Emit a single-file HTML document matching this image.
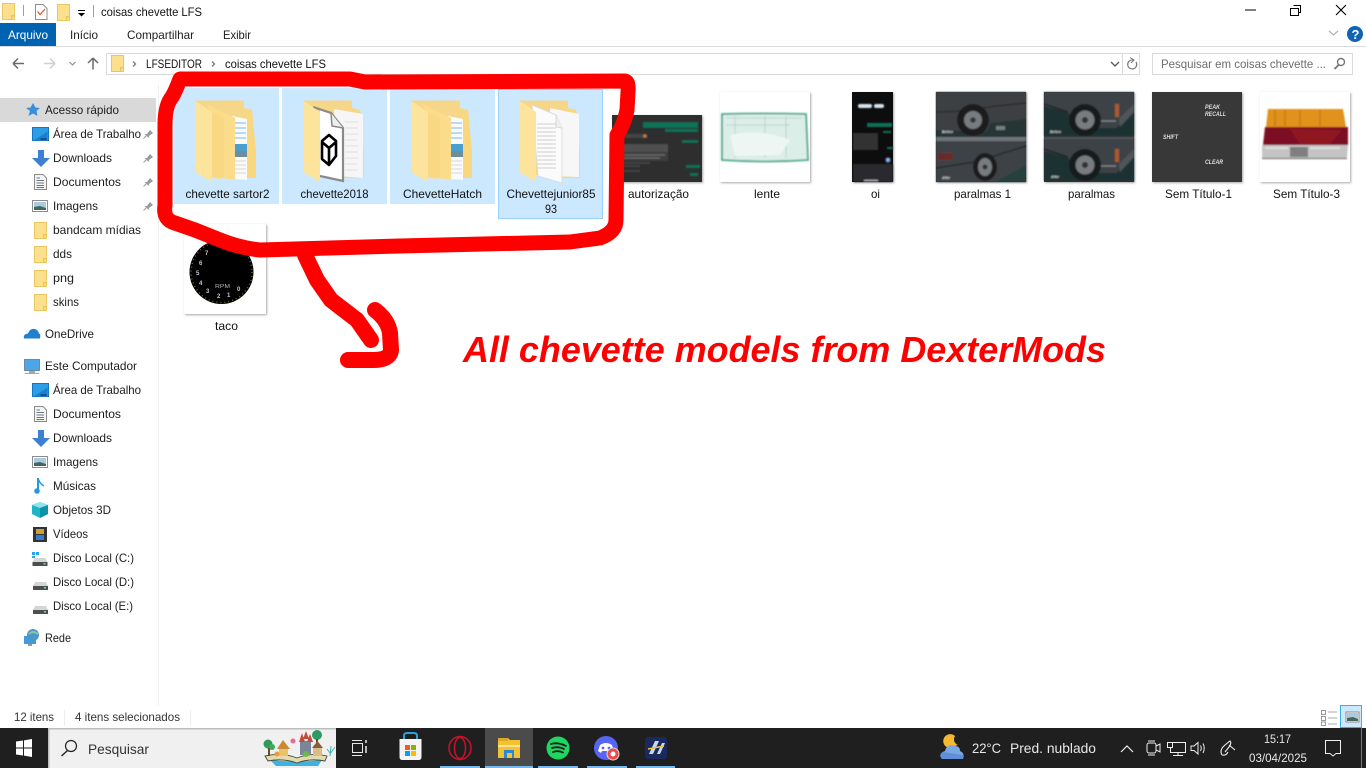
<!DOCTYPE html>
<html><head><meta charset="utf-8"><title>coisas chevette LFS</title>
<style>
html,body{margin:0;padding:0;background:#fff;overflow:hidden;width:1366px;height:768px}
svg{display:block;position:absolute;left:0;top:0}
text{font-family:"Liberation Sans",sans-serif;font-size:12px;fill:#111}
.s{fill:#1c1c1c}
.w{fill:#e8e8e8}
.n{font-size:6px;font-weight:bold;fill:#c8c8c8}
.t{font-size:6px;font-weight:bold;font-style:italic;fill:#ddd}
.c{font-size:3.5px;font-style:italic;font-weight:bold;fill:#ddd}
</style></head><body>
<svg width="1366" height="768" viewBox="0 0 1366 768" xmlns="http://www.w3.org/2000/svg">
<defs>
<filter id="b" x="-5%" y="-5%" width="110%" height="110%"><feGaussianBlur stdDeviation="0.85"/></filter>
<filter id="b2" x="-5%" y="-5%" width="110%" height="110%"><feGaussianBlur stdDeviation="0.3"/></filter>
<filter id="sh" x="-5%" y="-5%" width="112%" height="112%"><feDropShadow dx="1" dy="1" stdDeviation="1" flood-color="#000" flood-opacity=".35"/></filter>
<g id="sf"><path d="M.5 .5H12.5V16.5H.5Z" fill="#fde08d" stroke="#e9c65f"/><path d="M9.500 16V12.500H12.500" fill="#f7cf65" stroke="#e9c65f"/></g>
<g id="back"><path d="M195 100.500H244V108L252 110L256 153V178H230L195 172Z" fill="#f6d688"/><path d="M244 108L252 110L256 153V178H246Z" fill="#f9d77f"/></g>
<g id="front"><path d="M204 103L235 118V148L222 153V180L212 177V112Z" fill="#fbdc8a"/><path d="M222 153L235 148V180L222 178Z" fill="#fbdc8a"/><path d="M212 112L224 119V178L212 177Z" fill="#f8d883"/><path d="M195 100.500L212 112V182L195 172Z" fill="#fde49c"/></g>
<g id="blueDoc"><path d="M232 116L247 119V180L233 179Z" fill="#fafafa"/><path d="M235 123H246M235 128H246M235 133H246M235 138H246" stroke="#74bde8" stroke-width="1"/><rect x="235" y="144" width="12" height="13" fill="#4b9fd0"/><rect x="235" y="151" width="12" height="6" fill="#6d8f9d"/><path d="M234 161H246M234 165H246M234 169H246M234 173H246" stroke="#d5d5d5"/></g>
<g id="dl"><path d="M0 8H6V0H12V8H18L9 17Z" fill="#3b80d2"/></g>
<g id="desk"><rect x="0" y="0" width="16" height="13" fill="#2c9ee6" stroke="#1476c2"/><path d="M1 13L15 4V13Z" fill="#1a80d4"/><rect x="8" y="11" width="6" height="1" fill="#222"/></g>
<g id="docu"><path d="M.5 .5H9L12.5 4V15.5H.5Z" fill="#f4f4f4" stroke="#8a8a8a"/><path d="M2.500 4H6M2.500 6.500H10M2.500 9H10M2.500 11.500H10M2.500 13.500H10" stroke="#6c7a86"/></g>
<g id="pic"><rect x=".5" y=".5" width="15" height="11" fill="#fff" stroke="#8d8d8d"/><rect x="2" y="2" width="12" height="8" fill="#a8cbe3"/><path d="M2 7L8 6L14 8V10H2Z" fill="#47655a"/></g>
<g id="pin" fill="#9a9a9a"><path d="M4 5L7 1L10 4L6 7L5.500 9L1.500 5Z"/><path d="M3 7L.5 9.500" stroke="#9a9a9a"/></g>
<g id="drive"><path d="M2 6H13L15 10H0Z" fill="#d6d6d6"/><rect x="0" y="10" width="15" height="4" fill="#4b4f52"/><rect x="11" y="11" width="2" height="1.500" fill="#6fdc6f"/></g>
<g id="carA"><rect width="90" height="45" fill="#283635"/><path d="M0 0H90V27L55 31L50 40L0 38Z" fill="#3c4043"/><path d="M0 20L26 19L60 14L90 11" stroke="#2a2c2e" stroke-width="1.500" fill="none"/><circle cx="37" cy="28" r="16" fill="#1b1d1e"/><circle cx="37" cy="28" r="9" fill="#787c7f"/><circle cx="37" cy="28" r="2.800" fill="#35383a"/></g>
<g id="carB"><rect width="90" height="44" fill="#1f3230"/><path d="M0 0H90V20L72 36H48L22 20L0 14Z" fill="#3e4347"/><path d="M48 29H72" stroke="#8f9294" stroke-width="1" fill="none"/><path d="M0 12L24 20" stroke="#202224" stroke-width="1.500"/><rect x="71" y="12" width="4" height="13" fill="#a95a2c"/><path d="M75 27L90 12V20L76 35Z" fill="#50555a"/><circle cx="41" cy="28" r="16" fill="#191b1c"/><circle cx="41" cy="28" r="9.500" fill="#787c7f"/><circle cx="41" cy="28" r="3" fill="#2e3032"/></g>
</defs>

<!-- title bar -->
<use href="#sf" x="2" y="3"/>
<rect x="23" y="5" width="1" height="11" fill="#a0a0a0"/>
<path d="M35.500 4.500H43L47 8.500V19.500H35.500Z" fill="#fff" stroke="#8d8d8d"/><path d="M37.500 11.500L40 14.500L45 9" fill="none" stroke="#e8562a" stroke-width="1.300"/>
<use href="#sf" x="57" y="4"/>
<rect x="78" y="10" width="7" height="1" fill="#000"/><path d="M78 13H85L81.500 16.500Z" fill="#000"/>
<rect x="93" y="5" width="1" height="12" fill="#a0a0a0"/>
<text x="101" y="16" textLength="101" lengthAdjust="spacingAndGlyphs">coisas chevette LFS</text>
<path d="M1245 10H1256" stroke="#000" stroke-width="1"/>
<path d="M1293.500 5.500H1300.500V12.500H1298.500M1290.500 8.500H1298.500V15.500H1290.500Z" fill="none" stroke="#000"/>
<path d="M1336 5L1346 15M1346 5L1336 15" stroke="#000" stroke-width="1.100"/>

<!-- ribbon -->
<rect x="0" y="23" width="56" height="23" fill="#0063b1"/>
<text x="8" y="39" textLength="40" lengthAdjust="spacingAndGlyphs" style="fill:#fff">Arquivo</text>
<text x="70" y="39" textLength="28" lengthAdjust="spacingAndGlyphs" class="s">Início</text>
<text x="127" y="39" textLength="67" lengthAdjust="spacingAndGlyphs" class="s">Compartilhar</text>
<text x="223" y="39" textLength="28" lengthAdjust="spacingAndGlyphs" class="s">Exibir</text>
<rect x="0" y="46" width="1366" height="1" fill="#dadbdc"/>
<path d="M1329 31L1333.500 35L1338 31" fill="none" stroke="#b0b0b0" stroke-width="1.200"/>
<circle cx="1355" cy="34" r="8" fill="#0f62b4"/><text x="1351.500" y="39" style="font-size:13px;font-weight:bold;fill:#fff">?</text>

<!-- nav -->
<path d="M13 63.500H24M13 63.500L18 58.500M13 63.500L18 68.500" fill="none" stroke="#6a6a6a" stroke-width="1.500"/>
<path d="M55 63.500H44M55 63.500L50 58.500M55 63.500L50 68.500" fill="none" stroke="#cfcfcf" stroke-width="1.500"/>
<path d="M69.500 62L72.500 65L75.500 62" fill="none" stroke="#9a9a9a" stroke-width="1.300"/>
<path d="M93 69.500V58M93 58L88 63M93 58L98 63" fill="none" stroke="#6a6a6a" stroke-width="1.500"/>
<rect x="106.500" y="53.500" width="1033" height="21" fill="#fff" stroke="#d9d9d9"/>
<use href="#sf" x="111" y="55"/>
<path d="M133 61.500L135.500 64L133 66.500" fill="none" stroke="#777" stroke-width="1.300"/>
<text x="146" y="68" textLength="56" lengthAdjust="spacingAndGlyphs">LFSEDITOR</text>
<path d="M212 61.500L214.500 64L212 66.500" fill="none" stroke="#777" stroke-width="1.300"/>
<text x="225" y="68" textLength="101" lengthAdjust="spacingAndGlyphs">coisas chevette LFS</text>
<path d="M1111 62L1115 66L1119 62" fill="none" stroke="#555" stroke-width="1.300"/>
<rect x="1122" y="54" width="1" height="20" fill="#d9d9d9"/>
<path d="M1136 62A4.500 4.500 0 1 1 1133 60" fill="none" stroke="#777" stroke-width="1.200"/><path d="M1130 57.500L1134 60L1131 63" fill="none" stroke="#777"/>
<rect x="1152.500" y="53.500" width="200" height="21" fill="#fff" stroke="#d9d9d9"/>
<text x="1161" y="68" textLength="165" lengthAdjust="spacingAndGlyphs" style="fill:#6d6d6d">Pesquisar em coisas chevette ...</text>
<circle cx="1341" cy="62" r="3.500" fill="none" stroke="#777" stroke-width="1.400"/><path d="M1338.500 65L1334.500 69" stroke="#777" stroke-width="1.800"/>

<!-- sidebar -->
<rect x="158" y="85" width="1" height="620" fill="#f0f0f0"/>
<rect x="0" y="98" width="156" height="24" fill="#d9d9d9"/>
<path d="M33 103L35.500 107.500L40 108L36.500 111L37.500 116L33 113.500L28.500 116L30 111L26 108L30.500 107.500Z" fill="#3a8fdc"/>
<text x="45" y="114" textLength="74" lengthAdjust="spacingAndGlyphs" class="s">Acesso rápido</text>
<use href="#desk" x="32.500" y="127.500"/><text x="53" y="138" textLength="88" lengthAdjust="spacingAndGlyphs" class="s">Área de Trabalho</text><use href="#pin" x="143" y="129"/>
<use href="#dl" x="32" y="150"/><text x="53" y="162" textLength="59" lengthAdjust="spacingAndGlyphs" class="s">Downloads</text><use href="#pin" x="143" y="153"/>
<use href="#docu" x="34" y="174"/><text x="53" y="186" textLength="68" lengthAdjust="spacingAndGlyphs" class="s">Documentos</text><use href="#pin" x="143" y="177"/>
<use href="#pic" x="32" y="200"/><text x="53" y="210" textLength="45" lengthAdjust="spacingAndGlyphs" class="s">Imagens</text><use href="#pin" x="143" y="201"/>
<use href="#sf" x="34" y="222"/><text x="53" y="234" textLength="88" lengthAdjust="spacingAndGlyphs" class="s">bandcam mídias</text>
<use href="#sf" x="34" y="246"/><text x="53" y="258" textLength="19" lengthAdjust="spacingAndGlyphs" class="s">dds</text>
<use href="#sf" x="34" y="270"/><text x="53" y="282" textLength="21" lengthAdjust="spacingAndGlyphs" class="s">png</text>
<use href="#sf" x="34" y="294"/><text x="53" y="306" textLength="26" lengthAdjust="spacingAndGlyphs" class="s">skins</text>
<path d="M24 338.500Q23 334 28 333.500Q30 328 35 329Q38 330 39 333.500Q41 334 40 338.500Z" fill="#1f7fd0"/>
<text x="45" y="338" textLength="49" lengthAdjust="spacingAndGlyphs" class="s">OneDrive</text>
<rect x="24.500" y="359.500" width="15" height="11" fill="#4aa6e8" stroke="#6d8aa0"/><rect x="29" y="371" width="6" height="2" fill="#9aa"/><rect x="25" y="373" width="14" height="1" fill="#9aa"/>
<text x="45" y="370" textLength="92" lengthAdjust="spacingAndGlyphs" class="s">Este Computador</text>
<use href="#desk" x="32.500" y="383.500"/><text x="53" y="394" textLength="88" lengthAdjust="spacingAndGlyphs" class="s">Área de Trabalho</text>
<use href="#docu" x="34" y="406"/><text x="53" y="418" textLength="68" lengthAdjust="spacingAndGlyphs" class="s">Documentos</text>
<use href="#dl" x="32" y="430"/><text x="53" y="442" textLength="59" lengthAdjust="spacingAndGlyphs" class="s">Downloads</text>
<use href="#pic" x="32" y="456"/><text x="53" y="466" textLength="45" lengthAdjust="spacingAndGlyphs" class="s">Imagens</text>
<path d="M38 478V491" stroke="#1f9be0" stroke-width="2"/><circle cx="37" cy="491" r="2.800" fill="#1f9be0"/><path d="M38 478Q39 483 44 486" fill="none" stroke="#1f9be0" stroke-width="1.500"/>
<text x="53" y="490" textLength="43" lengthAdjust="spacingAndGlyphs" class="s">Músicas</text>
<path d="M40 502L48 505V514L40 518L32 514V505Z" fill="#1fb5c8"/><path d="M32 505L40 508L48 505L40 502Z" fill="#8fe3ec"/><path d="M40 508V518L48 514V505Z" fill="#0c93a8"/>
<text x="53" y="514" textLength="58" lengthAdjust="spacingAndGlyphs" class="s">Objetos 3D</text>
<rect x="33" y="527" width="14" height="15" fill="#333"/><rect x="36" y="529" width="8" height="5" fill="#c9a33a"/><rect x="36" y="535" width="8" height="5" fill="#3a77c9"/>
<text x="53" y="538" textLength="35" lengthAdjust="spacingAndGlyphs" class="s">Vídeos</text>
<use href="#drive" x="32.500" y="552"/><rect x="32" y="552" width="3" height="3" fill="#2aa3e8"/><rect x="36" y="552" width="3" height="3" fill="#2aa3e8"/><rect x="32" y="556" width="3" height="2" fill="#2aa3e8"/>
<text x="53" y="562" textLength="81" lengthAdjust="spacingAndGlyphs" class="s">Disco Local (C:)</text>
<use href="#drive" x="33" y="576"/><text x="53" y="586" textLength="81" lengthAdjust="spacingAndGlyphs" class="s">Disco Local (D:)</text>
<use href="#drive" x="33" y="600"/><text x="53" y="610" textLength="80" lengthAdjust="spacingAndGlyphs" class="s">Disco Local (E:)</text>
<rect x="24" y="636" width="12" height="8" fill="#3f9be0"/><rect x="28" y="644" width="4" height="2" fill="#999"/><circle cx="33" cy="635" r="6" fill="#4c97c8"/><path d="M29 634Q33 630 38 634" stroke="#8cc6a0" fill="none" stroke-width="2"/>
<text x="45" y="642" textLength="26" lengthAdjust="spacingAndGlyphs" class="s">Rede</text>

<!-- selected tiles -->
<rect x="174" y="88" width="105" height="116" fill="#cce8ff"/>
<rect x="282" y="88" width="105" height="116" fill="#cce8ff"/>
<rect x="390" y="89" width="105" height="115" fill="#cce8ff"/>
<rect x="498.500" y="89.500" width="104" height="129" fill="#cce8ff" stroke="#99d1ff"/>

<!-- folder 1 -->
<use href="#back"/><use href="#blueDoc"/><use href="#front"/>
<!-- folder 2 -->
<g transform="translate(108 0)"><use href="#back"/>
<path d="M226 109L255 114V178L230 176Z" fill="#f6f6f6"/><path d="M237 122H250M237 128H250M237 134H250M237 140H250M237 146H250M237 152H250M237 158H250M237 164H250M237 170H250" stroke="#e0e0e0"/></g>
<path d="M313 106L331 113L343 128V182L320 177V110Z" fill="#fff"/>
<path d="M313 107L331 113L343 128V181L320 176" fill="none" stroke="#8a8a8a" stroke-width="2.200"/><path d="M331 113L332 126L343 128" fill="#eee" stroke="#8a8a8a" stroke-width="1.500"/>
<path d="M322 141L329 135L336 141V156L329 165L322 159Z M322 142L329 148V164 M329 148L336 142" fill="none" stroke="#000" stroke-width="2.600" stroke-linejoin="round"/>
<path d="M303 100.500L320 112V182L303 172Z" fill="#fde49c"/>
<!-- folder 3 -->
<g transform="translate(216 0)"><use href="#back"/><use href="#blueDoc"/><use href="#front"/></g>
<!-- folder 4 -->
<g transform="translate(324 0)"><use href="#back"/>
<path d="M226 108L255 114L255 177L228 176Z" fill="#f7f7f7"/>
<path d="M208 105L232 115L238 128L238 183L214 176Z" fill="#fbfbfb" stroke="#dcdcdc"/>
<path d="M232 115L232 127L238 128" fill="#f0f0f0" stroke="#d8d8d8"/>
<path d="M213 124H232M213 128H232M213 132H232M213 136H232M213 140H232M213 144H232M213 148H232M213 152H232M213 156H232M213 160H232M213 164H232M213 168H232" stroke="#cfcfcf" stroke-width=".9"/>
<path d="M195 100.500L212 112V182L195 172Z" fill="#fde49c"/></g>

<!-- labels -->
<text x="185.500" y="198" textLength="84" lengthAdjust="spacingAndGlyphs">chevette sartor2</text>
<text x="300.500" y="198" textLength="68" lengthAdjust="spacingAndGlyphs">chevette2018</text>
<text x="403" y="198" textLength="79" lengthAdjust="spacingAndGlyphs">ChevetteHatch</text>
<text x="506.500" y="198" textLength="89" lengthAdjust="spacingAndGlyphs">Chevettejunior85</text>
<text x="545" y="213" textLength="12" lengthAdjust="spacingAndGlyphs">93</text>
<text x="628" y="198" textLength="61" lengthAdjust="spacingAndGlyphs">autorização</text>
<text x="754" y="198" textLength="26" lengthAdjust="spacingAndGlyphs">lente</text>
<text x="871" y="198" textLength="9" lengthAdjust="spacingAndGlyphs">oi</text>
<text x="954" y="198" textLength="57" lengthAdjust="spacingAndGlyphs">paralmas 1</text>
<text x="1068" y="198" textLength="47" lengthAdjust="spacingAndGlyphs">paralmas</text>
<text x="1165" y="198" textLength="67" lengthAdjust="spacingAndGlyphs">Sem Título-1</text>
<text x="1273" y="198" textLength="67" lengthAdjust="spacingAndGlyphs">Sem Título-3</text>
<text x="215" y="330" textLength="23" lengthAdjust="spacingAndGlyphs">taco</text>

<!-- autorizacao -->
<g filter="url(#sh)"><rect x="612" y="115" width="90" height="67" fill="#2d2d2d"/></g>
<g filter="url(#b)">
<rect x="643" y="122" width="55" height="6" fill="#0c7256"/><rect x="665" y="129" width="33" height="3" fill="#0c7256"/>
<rect x="682" y="140" width="16" height="3" fill="#0c7256"/>
<rect x="624" y="134" width="20" height="4" fill="#444"/><circle cx="645" cy="136" r="2" fill="#b74"/>
<rect x="623" y="144" width="45" height="8" fill="#505050"/>
<rect x="623" y="152" width="45" height="9" fill="#3c3c3c"/><path d="M624 155H665M624 158H660" stroke="#8a8a8a" stroke-width=".7"/>
<path d="M624 163H650M624 166H640M624 171H640" stroke="#666" stroke-width=".8"/>
<rect x="686" y="165" width="14" height="3" fill="#0c7256"/><rect x="690" y="173" width="8" height="3" fill="#0c7256"/>
</g>
<!-- lente -->
<g filter="url(#sh)"><rect x="720" y="92" width="90" height="90" fill="#fff"/></g>
<g filter="url(#b)">
<path d="M722 114Q765 113 806 114L808 160Q765 163 722 160Z" fill="#dceee8" stroke="#49a68c" stroke-width="1.800"/>
<path d="M726 118L802 118M726 125H790M735 116V158M765 116V158M786 116V158" stroke="#bdd2cb" stroke-width="1" fill="none"/>
<path d="M730 135Q760 128 790 140L780 155L735 156Z" fill="#eef6f3"/>
</g>
<!-- oi -->
<g filter="url(#sh)"><rect x="852" y="92" width="41" height="90" fill="#0c0c0c"/></g>
<g filter="url(#b)">
<rect x="858" y="104" width="14" height="4" rx="2" fill="#d8e4f0"/><rect x="874" y="104" width="10" height="4" rx="2" fill="#d8e4f0"/>
<rect x="867" y="123" width="25" height="4" fill="#0c7256"/><rect x="853" y="133" width="25" height="17" fill="#333"/>
<rect x="883" y="131" width="8" height="2" fill="#0c7256"/><rect x="887" y="147" width="6" height="2" fill="#0c7256"/>
<circle cx="888" cy="160" r="2.500" fill="#7aa7e8"/>
<rect x="853" y="164" width="40" height="18" rx="2" fill="#2b2b2d"/><rect x="864" y="180" width="14" height="1" fill="#ccc"/>
</g>
<!-- paralmas 1 -->
<g filter="url(#sh)"><rect x="936" y="92" width="90" height="90" fill="#333"/></g>
<g filter="url(#b)">
<g transform="translate(936 92)"><use href="#carA"/>
<rect x="60" y="34" width="9" height="4" fill="#a7b0ad" opacity=".6"/>
<text x="6" y="41" class="c">Before</text></g>
<rect x="936" y="137" width="90" height="4" fill="#6f757a"/>
<rect x="936" y="141" width="90" height="41" fill="#3e4246"/>
<path d="M936 168L975 162L1026 146" stroke="#26282a" stroke-width="1.500" fill="none"/>
<path d="M995 182L1026 165V182Z" fill="#27403e"/>
<rect x="938" y="153" width="15" height="7" fill="#6a2a2a"/>
<ellipse cx="985" cy="167" rx="12" ry="14" fill="#1b1d1e"/><ellipse cx="985" cy="167" rx="7" ry="9" fill="#787c7f"/><circle cx="985" cy="167" r="2.500" fill="#2e3032"/>
<text x="942" y="179" class="c">After</text>
</g>
<!-- paralmas -->
<g filter="url(#sh)"><rect x="1044" y="92" width="90" height="90" fill="#333"/></g>
<g filter="url(#b)">
<g transform="translate(1044 92)"><use href="#carB"/><text x="6" y="41" class="c">Before</text></g>
<g transform="translate(1044 137)"><use href="#carB"/><rect x="0" y="0" width="90" height="2" fill="#50555a"/><text x="7" y="41" class="c">After</text></g>
</g>
<!-- sem titulo 1 -->
<g filter="url(#sh)"><rect x="1152" y="92" width="90" height="90" fill="#383838"/></g>
<g filter="url(#b2)"><text x="1205" y="109" textLength="15" lengthAdjust="spacingAndGlyphs" class="t">PEAK</text>
<text x="1205" y="116" textLength="21" lengthAdjust="spacingAndGlyphs" class="t">RECALL</text>
<text x="1163" y="139" textLength="15" lengthAdjust="spacingAndGlyphs" class="t">SHIFT</text>
<text x="1205" y="164" textLength="18" lengthAdjust="spacingAndGlyphs" class="t">CLEAR</text></g>
<!-- sem titulo 3 -->
<g filter="url(#sh)"><rect x="1260" y="92" width="90" height="90" fill="#fff"/></g>
<g filter="url(#b)">
<path d="M1268 109H1343L1346 127H1266Z" fill="#e0921c"/><path d="M1275 110V126M1285 110V126M1300 110V126M1320 110V126" stroke="#c77a18" stroke-width="2" opacity=".7"/>
<path d="M1265 127H1348L1348 145L1263 145Z" fill="#7d1020"/><path d="M1290 129L1300 144H1330L1342 130Z" fill="#a31e28" opacity=".5"/>
<path d="M1262 145L1348 145L1347 158L1262 158Z" fill="#c4c4c4"/><path d="M1290 147V157H1308V147Z" fill="#7f7f7f"/><path d="M1265 148H1288M1310 148H1340" stroke="#e0e0e0" stroke-width="2"/><path d="M1262 158.500H1347" stroke="#555" stroke-width="1"/>
</g>
<!-- taco -->
<g filter="url(#sh)"><rect x="184" y="224" width="82" height="90" fill="#fff"/></g>
<ellipse cx="221.500" cy="272" rx="32" ry="32" fill="#000"/>
<circle cx="221.500" cy="272" r="30.500" fill="none" stroke="#6e6c22" stroke-width="1.500" stroke-dasharray="1 3"/>
<text x="205" y="255" class="n">7</text><text x="199" y="265" class="n">6</text><text x="196" y="275" class="n">5</text><text x="199" y="285" class="n">4</text><text x="206" y="293" class="n">3</text><text x="217" y="298" class="n">2</text><text x="227" y="297" class="n">1</text><text x="237" y="291" class="n">0</text><text x="215" y="288" textLength="15" lengthAdjust="spacingAndGlyphs" style="font-size:5px;fill:#bbb">RPM</text>

<!-- red scribble -->
<g fill="none" stroke="#fe0000" stroke-width="15" stroke-linecap="round" stroke-linejoin="round">
<path d="M180 79L350 79L365 82L625 81Q629 82 628 92L627 110Q624 125 617 135L616 220Q616 232 600 238L570 242L400 246L260 250Q240 248 220 240L195 230L172 222Q163 218 165 205L165 125Q165 105 172 97Q176 90 180 79Z"/>
<path d="M305 255L317 280L331 300L357 320L371 340" stroke-width="16"/>
<path d="M375 310Q388 320 390 333L391 350Q390 360 373 360L348 360" stroke-width="16"/>
</g>
<text x="463" y="362" textLength="643" lengthAdjust="spacingAndGlyphs" style="font-size:36px;font-weight:bold;font-style:italic;fill:#fe0000">All chevette models from DexterMods</text>

<!-- status -->
<text x="14" y="721" textLength="40" lengthAdjust="spacingAndGlyphs" style="fill:#333">12 itens</text>
<rect x="64" y="710" width="1" height="16" fill="#eee"/>
<text x="75" y="721" textLength="105" lengthAdjust="spacingAndGlyphs" style="fill:#333">4 itens selecionados</text>
<rect x="190" y="710" width="1" height="16" fill="#eee"/>
<path d="M1321.500 710.500H1325.500V714.500H1321.500ZM1321.500 716.500H1325.500V720.500H1321.500ZM1321.500 722H1325.500V725.500H1321.500Z" fill="none" stroke="#999"/>
<path d="M1328 712H1337M1328 718H1337M1328 724H1337" stroke="#aaa"/>
<rect x="1340.500" y="705.500" width="21" height="22" fill="#cce8ff" stroke="#3daee0"/>
<rect x="1346" y="712" width="13" height="10" fill="#fff" stroke="#8d8d8d"/><rect x="1347" y="713" width="11" height="8" fill="#a8cbe3"/><path d="M1347 718L1353 717L1358 719V721H1347Z" fill="#47655a"/>

<!-- taskbar -->
<rect x="0" y="728" width="1366" height="40" fill="#1f1f1f"/>
<path d="M16 741.500L23 740.500V747.500H16ZM24 740.400L32 739V747.500H24ZM16 748.500H23V755.500L16 754.500ZM24 748.500H32V757L24 755.600Z" fill="#fff"/>
<rect x="48" y="728" width="288" height="40" fill="#f0f0f0"/>
<rect x="48" y="728" width="288" height="1.500" fill="#bdbdbd"/><rect x="48" y="728" width="1.500" height="40" fill="#bdbdbd"/>
<circle cx="71" cy="746" r="5.500" fill="none" stroke="#222" stroke-width="1.200"/><path d="M67.500 750.500L61.500 756" stroke="#222" stroke-width="1.400"/>
<text x="88" y="754" textLength="61" lengthAdjust="spacingAndGlyphs" style="font-size:14px;fill:#333">Pesquisar</text>
<!-- doodle -->
<g>
<path d="M270 760Q296 763 322 760L318 766H276Z" fill="#3fb3df"/>
<path d="M265 756Q282 752 297 758Q312 752 327 756L325 761Q310 758 297 763Q283 758 268 761Z" fill="#e6d9ae" stroke="#3f4a3c" stroke-width=".9"/>
<path d="M331 746L330 756M327 749L330 753M335 747L330 754" stroke="#3fb3b3" fill="none"/>
<circle cx="268" cy="744" r="4.500" fill="#2f9a58"/><circle cx="272" cy="747" r="3" fill="#3fa860"/><rect x="268" y="748" width="2" height="8" fill="#6b4a2a"/>
<path d="M279 748H288V756H279Z" fill="#e9c26a"/><path d="M277 749L283 740L290 749Z" fill="#c98a33"/>
<path d="M300 741H311V755H300Z" fill="#7b8698"/><path d="M299 742L302 733L305 742ZM303 739L306 731L309 739ZM307 742L310 734L313 742Z" fill="#c44a3b"/>
<circle cx="317" cy="735" r="5" fill="#2e9a63"/><rect x="316" y="739" width="2" height="4" fill="#6b4a2a"/>
<rect x="313" y="747" width="9" height="9" fill="#d9bd87"/><path d="M312 748L317.500 741L323 748Z" fill="#8a5f33"/>
<circle cx="293" cy="741" r="2.500" fill="#e36a9b"/><circle cx="277" cy="754" r="2.500" fill="#ef9a3a"/><circle cx="306" cy="754" r="3" fill="#6fb84a"/>
</g>
<!-- task view -->
<path d="M352 740.500H362M352 755.500H362" stroke="#e8e8e8"/><rect x="352.500" y="743.500" width="10" height="9" fill="none" stroke="#e8e8e8"/><path d="M366 740V743M366 746V753" stroke="#e8e8e8" stroke-width="1.500"/>
<!-- store -->
<path d="M399.500 739H421.500V757Q421.500 760 418.500 760H402.500Q399.500 760 399.500 757Z" fill="#f4f4f4"/>
<path d="M404 739V736Q404 733 407 733H414Q417 733 417 736V739" fill="none" stroke="#27a1e0" stroke-width="2"/>
<rect x="405" y="745" width="5" height="5" fill="#f05a28"/><rect x="411" y="745" width="5" height="5" fill="#7fba00"/><rect x="405" y="751" width="5" height="5" fill="#00a4ef"/><rect x="411" y="751" width="5" height="5" fill="#ffb900"/>
<!-- opera -->
<ellipse cx="460" cy="748" rx="11" ry="11.500" fill="none" stroke="#c9122a" stroke-width="1.500"/><ellipse cx="460" cy="748" rx="5.500" ry="10.500" fill="none" stroke="#c9122a" stroke-width="1.500"/>
<!-- explorer -->
<rect x="485" y="728" width="48" height="40" fill="#4b4b4b"/>
<path d="M498 738H508L510 740H520V758H498Z" fill="#f1c232"/><rect x="498" y="738" width="10" height="3" fill="#e0a82a"/>
<path d="M504 758V750H514V758" fill="#2b88d8"/><rect x="507" y="753" width="5" height="5" fill="#f1c232"/><rect x="498" y="745" width="22" height="2" fill="#ffe28a"/>
<!-- spotify -->
<circle cx="558" cy="748" r="11.500" fill="#1ed760"/><path d="M551 744Q558 742 566 746M552 748Q558 746 564 749M553 752Q558 750 563 752.500" fill="none" stroke="#1f1f1f" stroke-width="1.800" stroke-linecap="round"/>
<!-- discord -->
<circle cx="606" cy="748" r="12" fill="#5865f2"/><path d="M600 745Q606 741 612 745L614 751L611 753L610 751H602L601 753L598 751Z" fill="#fff"/><circle cx="603" cy="748" r="1.400" fill="#5865f2"/><circle cx="609" cy="748" r="1.400" fill="#5865f2"/>
<circle cx="613" cy="754" r="6" fill="#f04b4b" stroke="#d9d9d9" stroke-width="1"/><circle cx="613" cy="754" r="2.500" fill="#fff"/>
<!-- last app -->
<rect x="645" y="737" width="22" height="22" rx="3" fill="#1a2a5e"/><path d="M649 754L655 741H659L653 754ZM657 754L662 743H665L660 754Z" fill="#c7d9ef"/><path d="M648 749L664 746" stroke="#f0c040" stroke-width="1.500"/>
<rect x="440" y="766" width="40" height="2" fill="#76b9ed"/><rect x="485" y="766" width="48" height="2" fill="#76b9ed"/><rect x="538" y="766" width="40" height="2" fill="#76b9ed"/><rect x="587" y="766" width="40" height="2" fill="#76b9ed"/><rect x="636" y="766" width="39" height="2" fill="#76b9ed"/>

<!-- tray -->
<path d="M955 736A7 7 0 1 0 949 748L958 745A6 6 0 0 1 955 736Z" fill="#f5b82e"/>
<path d="M942 759Q938 753 945 751Q947 743 955 746Q960 746 960 751Q965 753 963 759Z" fill="#7aa8e6"/><path d="M942 759Q938 755 943 752L963 755V759Z" fill="#5f8fd8"/>
<text x="972" y="753" textLength="29" lengthAdjust="spacingAndGlyphs" class="w" style="font-size:14px">22°C</text>
<text x="1010" y="753" textLength="86" lengthAdjust="spacingAndGlyphs" class="w" style="font-size:14px">Pred. nublado</text>
<path d="M1121 752L1127 746L1133 752" fill="none" stroke="#eee" stroke-width="1.200"/>
<rect x="1147" y="743" width="9" height="10" rx="2" fill="none" stroke="#eee"/><path d="M1156 746L1160 744V752L1156 750ZM1148 741H1155M1148 755H1155" fill="none" stroke="#eee"/>
<rect x="1170.500" y="742.500" width="15" height="10" fill="none" stroke="#eee"/><rect x="1167.500" y="742.500" width="5" height="5" fill="#1f1f1f" stroke="#eee"/><path d="M1178 753V756M1173 755.500H1183" stroke="#eee"/>
<path d="M1191 746H1194L1198 742.500V754L1194 750.500H1191ZM1200.500 745.500Q1202 748 1200.500 751M1203 743.500Q1205.500 748 1203 753" fill="none" stroke="#eee"/>
<path d="M1222 755Q1219 750 1225 745L1230 741Q1232 743 1229 747L1225 752M1229 745L1235 750M1222 755Q1226 756 1228 752" fill="none" stroke="#eee" stroke-width="1.100"/>
<text x="1264" y="743" textLength="27" lengthAdjust="spacingAndGlyphs" class="w">15:17</text>
<text x="1249" y="762" textLength="58" lengthAdjust="spacingAndGlyphs" class="w">03/04/2025</text>
<path d="M1325.500 740.500H1340.500V753.500H1336L1333 756L1330 753.500H1325.500Z" fill="none" stroke="#eee"/>
<rect x="1361" y="728" width="1" height="40" fill="#777"/>
</svg>
</body></html>
